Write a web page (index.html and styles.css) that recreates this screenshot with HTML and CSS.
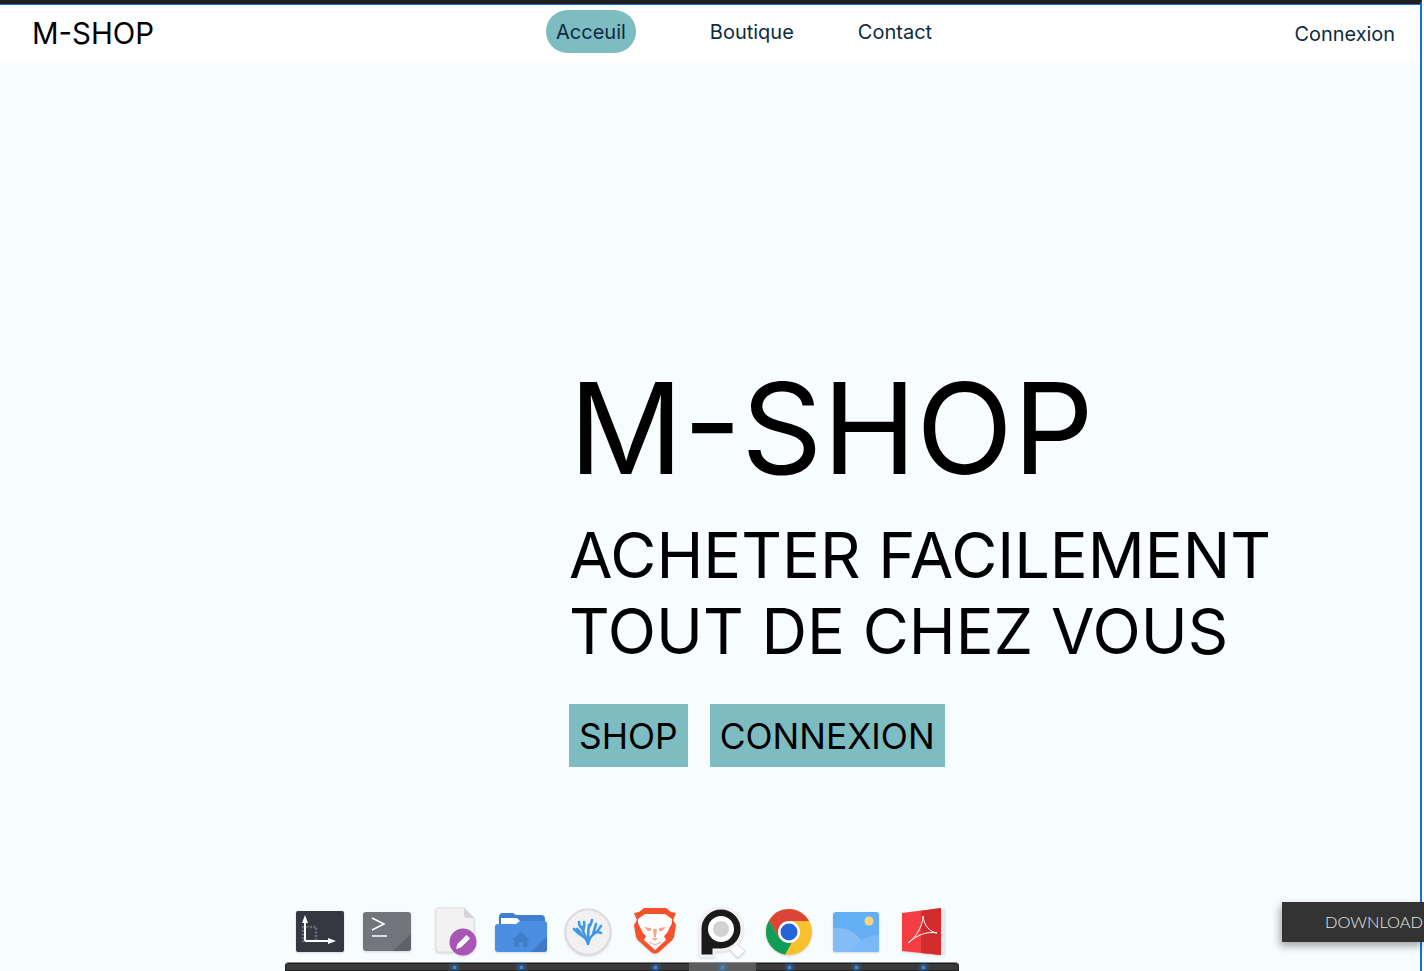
FILE: index.html
```html
<!DOCTYPE html>
<html lang="fr">
<head>
<meta charset="utf-8">
<title>M-SHOP</title>
<link rel="stylesheet" href="styles.css">
</head>
<body>
<div class="frame">
  <header class="nav">
    <a class="logo">M-SHOP</a>
    <nav class="links">
      <a class="link active">Acceuil</a>
      <a class="link">Boutique</a>
      <a class="link">Contact</a>
    </nav>
    <a class="login">Connexion</a>
  </header>
  <main class="hero">
    <div class="hero-text">
      <h1 class="title">M-SHOP</h1>
      <h2 class="subtitle">ACHETER FACILEMENT<br>TOUT DE CHEZ VOUS</h2>
      <div class="actions">
        <a class="btn">SHOP</a>
        <a class="btn">CONNEXION</a>
      </div>
    </div>
  </main>
</div>

<div class="download"><span class="download-text">DOWNLOAD</span></div>

<div class="dock">
  <div class="dock-icons">
    <div class="cell"><svg class="icon" viewBox="0 0 56 56">
      <rect x="4" y="7" width="48" height="41" rx="2" fill="#353841"/>
      <rect x="11" y="23" width="13" height="14" fill="none" stroke="#6b6e76" stroke-width="2.500" stroke-dasharray="2 1.500"/>
      <path d="M13 37V17M13 37H36" stroke="#fff" stroke-width="2"/>
      <path d="M13 11l-3 8h6zM44 37l-8-3v6z" fill="#fff"/>
    </svg></div>
    <div class="cell"><svg class="icon" viewBox="0 0 56 56">
      <rect x="4" y="8" width="48" height="39" rx="3" fill="#72757b"/>
      <path d="M52 30L34 47H49a3 3 0 0 0 3-3z" fill="#5f6267"/>
      <path d="M13 14l12 6-12 6" fill="none" stroke="#fff" stroke-width="1.500"/>
      <path d="M13 32H28" stroke="#fff" stroke-width="1.500"/>
    </svg></div>
    <div class="cell"><svg class="icon" viewBox="0 0 56 56">
      <path d="M13 4H38L48 14V45a3 3 0 0 1-3 3H13a3 3 0 0 1-3-3V7a3 3 0 0 1 3-3z" fill="#f2f2f2" stroke="#dedede"/>
      <path d="M38 4L48 14H41a3 3 0 0 1-3-3z" fill="#d4d4d4"/>
      <circle cx="37" cy="38" r="13.500" fill="#a855b5"/>
      <path d="M30 45l1.500-5 9-9 3.500 3.500-9 9z" fill="#fff"/>
    </svg></div>
    <div class="cell"><svg class="icon" viewBox="0 0 56 56">
      <path d="M6 13a4 4 0 0 1 4-4H20l3 2H48a4 4 0 0 1 4 4V22H6z" fill="#3f7fd0"/>
      <path d="M8 14H24l3 3H50v6H8z" fill="#fff"/>
      <path d="M2 23a3 3 0 0 1 3-3H23l4-3H51a3 3 0 0 1 3 3V45a3 3 0 0 1-3 3H5a3 3 0 0 1-3-3z" fill="#4b8fe2"/>
      <path d="M54 32L38 48H51a3 3 0 0 0 3-3z" fill="#3f7cc8"/>
      <path d="M28 28l-9 8h2.500v7h4.500v-5h4v5h4.500v-7h2.500zM28 31l-4.500 4v6h1v-5h7v5h1v-6z" fill="#3f7dc9"/>
    </svg></div>
    <div class="cell"><svg class="icon" viewBox="0 0 56 56">
      <circle cx="28" cy="28" r="22.500" fill="#f1f1f1" stroke="#dcdcdc" stroke-width="2"/>
      <path d="M28 40c-1-5-3-7-7-9s-5-4-7-6M28 40c-1-6-5-10-6-17M28 40c0-7 0-12 1-19M28 40c1-5 3-8 6-10s5-4 7-8M21 30c-1-3-3-4-4-5M22 24c-2-1-3-3-3-6M23 27c1-3 2-5 1-9M29 23c2-2 2-4 3-7M33 30c1-3 2-6 3-10M36 28c2 0 3 0 5 1" fill="none" stroke="#3f98e6" stroke-width="2.600" stroke-linecap="round"/>
    </svg></div>
    <div class="cell"><svg class="icon" viewBox="0 0 56 56">
      <path d="M17 4H39L44 8 49 9 46 16 49 21 47 33Q46 36 42 39L32 48Q28 51 24 48L14 39Q10 36 9 33L7 21 10 16 7 9 12 8z" fill="#f4512c"/>
      <path d="M18 10H38L45 15 45 19 40 29 37 32 39 36 28 46 17 36 19 32 16 29 11 19 11 15z" fill="#fff"/>
      <path d="M17 23l7 1 0 3-3 0zM39 23l-7 1 0 3 3 0zM25 34h6l-3 3zM26 25h4l-1 8h-2z" fill="#f9a28f"/>
      <path d="M22 38l6 3 6-3" fill="none" stroke="#f8a18d" stroke-width="1"/>
    </svg></div>
    <div class="cell"><svg class="icon" viewBox="0 0 56 56">
      <path d="M38 36l13 11-7 7-12-12z" fill="#fff" stroke="#d6d6d6"/>
      <path d="M6 51V25a21 21 0 1 1 21 21h-7v5a1 1 0 0 1-1 1H7a1 1 0 0 1-1-1z" fill="#1a1a1a" stroke="#f2f2f2" stroke-width="3"/>
      <circle cx="27" cy="25" r="10.500" fill="#d2d2d2" stroke="#fff" stroke-width="5"/>
    </svg></div>
    <div class="cell"><svg class="icon" viewBox="0 0 56 56">
      <circle cx="28" cy="28" r="23" fill="#fbc02d"/>
      <path d="M28 5A23 23 0 0 0 8 16.500L18 34 28 17H48A23 23 0 0 0 28 5z" fill="#db4437"/>
      <path d="M8 16.500A23 23 0 0 0 24 50.700L34 33 28 38 18 34z" fill="#0f9d58"/>
      <circle cx="28" cy="28" r="11" fill="#fff"/>
      <circle cx="28" cy="28" r="8.500" fill="#2563d6"/>
    </svg></div>
    <div class="cell"><svg class="icon" viewBox="0 0 56 56">
      <rect x="5" y="8" width="46" height="40" rx="3" fill="#64aef5"/>
      <path d="M5 24c15-2 30 8 34 24H8a3 3 0 0 1-3-3z" fill="#84bdf6"/>
      <path d="M23 48c4-10 14-16 28-17V45a3 3 0 0 1-3 3z" fill="#7ab8f6"/>
      <circle cx="41" cy="17" r="4.500" fill="#fbd77a"/>
    </svg></div>
    <div class="cell"><svg class="icon" viewBox="0 0 56 56">
      <path d="M46 5h4v45h-4z" fill="#e8e8e8"/>
      <path d="M7 9L46 4V51L7 47z" fill="#f33f42"/>
      <path d="M26 7L46 4V51L26 49z" fill="#d22c2e"/>
      <path d="M13 39c8-5 15-18 15-27M28 12c1 10 7 16 14 17M42 29c-10-2-20 2-29 10" fill="none" stroke="#fff" stroke-width="1"/>
    </svg></div>
  </div>
  <div class="dock-bar">
    <span class="slot"></span><span class="slot"></span>
    <span class="slot on"></span><span class="slot on"></span><span class="slot"></span>
    <span class="slot on"></span><span class="slot on current"></span><span class="slot on"></span>
    <span class="slot on"></span><span class="slot on"></span>
  </div>
</div>
</body>
</html>
```

FILE: styles.css
```css
* { box-sizing: border-box; }
html, body { margin: 0; height: 100%; overflow: hidden; }
body {
  position: relative;
  width: 1424px;
  height: 971px;
  background: #f7fdff;
  font-family: Inter, "Liberation Sans", sans-serif;
}
.frame {
  width: 1422px;
  height: 971px;
  border-top: 4px solid #1f1f1f;
  border-right: 2px solid #1c6fd8;
  display: flex;
  flex-direction: column;
  background: #f7fdff;
}
.nav {
  height: 59px;
  border-top: 1px solid #1c6fd8;
  background: #fff;
  display: flex;
  align-items: center;
  padding: 0 25px 0 32px;
}
.logo {
  font-size: 29.4px;
  line-height: 36px;
  color: #000;
  width: 514px;
}
.links {
  display: flex;
  align-items: center;
  gap: 44px;
  font-size: 20px;
  line-height: 24px;
  color: #0c2b40;
  margin-bottom: 6px;
}
.link { padding: 10.5px 10px 8.5px; }
.link.active {
  background: #7dbcc0;
  border-radius: 22px;
  margin-right: 20px;
}
.login {
  margin-left: auto;
  font-size: 19.9px;
  line-height: 24px;
  color: #0c2b40;
}
.hero {
  flex: 1;
  display: grid;
  grid-template-columns: 569px 1fr;
}
.hero-text {
  grid-column: 2;
  padding-top: 293px;
}
.title {
  margin: 0;
  font-size: 126.4px;
  line-height: 145px;
  font-weight: 400;
  color: #000;
}
.subtitle {
  margin: 16px 0 0;
  font-size: 63.1px;
  line-height: 76px;
  font-weight: 400;
  color: #000;
}
.actions {
  display: flex;
  gap: 22px;
  margin-top: 35px;
}
.btn {
  background: #7dbcc0;
  color: #000;
  font-size: 35.4px;
  line-height: 44px;
  padding: 11px 10px 8px;
}
.download {
  position: absolute;
  left: 1282px;
  top: 902px;
  width: 142px;
  height: 40px;
  background: #333;
  box-shadow: -2px 4px 8px rgba(0, 0, 0, 0.35);
  color: #e6e6e6;
  font-family: Lato, "Open Sans", sans-serif;
  font-weight: 300;
  font-size: 16.4px;
  line-height: 39px;
  padding-left: 43px;
  white-space: nowrap;
}
.download-text { display: block; }
.dock {
  position: absolute;
  left: 285px;
  bottom: 0;
  width: 674px;
}
.dock-icons {
  display: flex;
  padding: 0 3px 2px 1px;
}
.cell {
  width: 67px;
  height: 56px;
  display: flex;
  justify-content: center;
}
.icon {
  width: 56px;
  height: 56px;
  display: block;
  filter: drop-shadow(0 1px 1px rgba(0, 0, 0, 0.15));
}
.dock-bar {
  height: 9px;
  display: flex;
  padding: 0 2px;
  background: #3a3a3a;
  border-top: 1px solid #8a8a8a;
  border-radius: 4px 4px 0 0;
  box-shadow: 0 0 0 1px #1f1f1f inset;
}
.slot {
  width: 67px;
  position: relative;
}
.slot.current { background: #5d5d5d; }
.slot.on::after {
  content: "";
  position: absolute;
  left: 32px;
  bottom: 2px;
  width: 3px;
  height: 3px;
  background: #2f8cf0;
  box-shadow: 0 0 4px 2px rgba(60, 150, 255, 0.45);
}
```
